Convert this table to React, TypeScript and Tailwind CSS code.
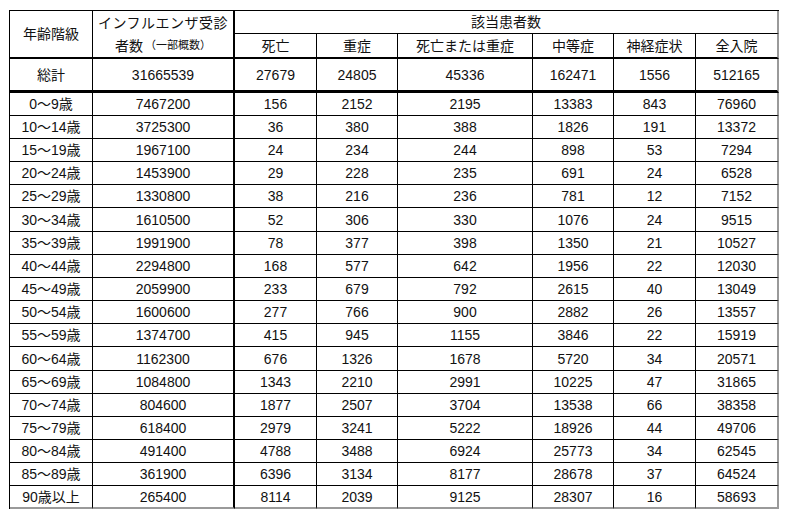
import React from "react";

const rows: [string, string, string, string, string, string, string, string][] = [
  ["0～9歳", "7467200", "156", "2152", "2195", "13383", "843", "76960"],
  ["10～14歳", "3725300", "36", "380", "388", "1826", "191", "13372"],
  ["15～19歳", "1967100", "24", "234", "244", "898", "53", "7294"],
  ["20～24歳", "1453900", "29", "228", "235", "691", "24", "6528"],
  ["25～29歳", "1330800", "38", "216", "236", "781", "12", "7152"],
  ["30～34歳", "1610500", "52", "306", "330", "1076", "24", "9515"],
  ["35～39歳", "1991900", "78", "377", "398", "1350", "21", "10527"],
  ["40～44歳", "2294800", "168", "577", "642", "1956", "22", "12030"],
  ["45～49歳", "2059900", "233", "679", "792", "2615", "40", "13049"],
  ["50～54歳", "1600600", "277", "766", "900", "2882", "26", "13557"],
  ["55～59歳", "1374700", "415", "945", "1155", "3846", "22", "15919"],
  ["60～64歳", "1162300", "676", "1326", "1678", "5720", "34", "20571"],
  ["65～69歳", "1084800", "1343", "2210", "2991", "10225", "47", "31865"],
  ["70～74歳", "804600", "1877", "2507", "3704", "13538", "66", "38358"],
  ["75～79歳", "618400", "2979", "3241", "5222", "18926", "44", "49706"],
  ["80～84歳", "491400", "4788", "3488", "6924", "25773", "34", "62545"],
  ["85～89歳", "361900", "6396", "3134", "8177", "28678", "37", "64524"],
  ["90歳以上", "265400", "8114", "2039", "9125", "28307", "16", "58693"],
];

const colBorder = (i: number) =>
  i === 1
    ? "border-r-2 border-r-black"
    : i === 7
    ? "border-r-2 border-r-[#9a9a9a]"
    : "border-r border-r-black";

export default function App() {
  return (
    <div
      className="w-[790px] h-[515px] bg-white overflow-hidden text-[#111]"
      style={{ fontFamily: '"Liberation Sans", "Noto Sans CJK JP", sans-serif' }}
    >
      <div className="pt-[10px] pl-[9px]">
        <div className="grid w-[770px] grid-cols-[83px_142px_82px_81px_135px_81px_82px_83px] grid-rows-[23px_25px_34px_23px_23px_23px_23px_23px_24px_23px_23px_23px_23px_23px_24px_23px_23px_23px_23px_23px_23px] border-l border-t border-black text-[14px] leading-none">
          {/* header */}
          <div className="row-span-2 flex items-center justify-center border-r border-b-2 border-black">
            年齢階級
          </div>
          <div className="row-span-2 flex flex-col border-r-2 border-b-2 border-black">
            <div className="flex h-[23px] items-center justify-center tracking-[0.5px]">
              インフルエンザ受診
            </div>
            <div className="flex h-[23px] items-center justify-center">
              者数<span className="ml-[2px] text-[11px]">（一部概数）</span>
            </div>
          </div>
          <div className="col-span-6 flex items-center justify-center border-r-2 border-r-[#9a9a9a] border-b border-b-black">
            該当患者数
          </div>
          {["死亡", "重症", "死亡または重症", "中等症", "神経症状", "全入院"].map(
            (h, j) => (
              <div
                key={h}
                className={`flex items-center justify-center border-b-2 border-b-black ${colBorder(
                  j + 2
                )}`}
              >
                {h}
              </div>
            )
          )}
          {/* total */}
          {["総計", "31665539", "27679", "24805", "45336", "162471", "1556", "512165"].map(
            (v, i) => (
              <div
                key={"t" + i}
                className={`flex items-center justify-center border-b-[3px] border-b-black ${colBorder(
                  i
                )}`}
              >
                {v}
              </div>
            )
          )}
          {rows.map((r, ri) =>
            r.map((v, i) => (
              <div
                key={ri + "-" + i}
                className={`flex items-center justify-center ${
                  ri === rows.length - 1
                    ? "border-b-2 border-b-[#9a9a9a]"
                    : "border-b border-b-black"
                } ${colBorder(i)}`}
              >
                {v}
              </div>
            ))
          )}
        </div>
      </div>
    </div>
  );
}
